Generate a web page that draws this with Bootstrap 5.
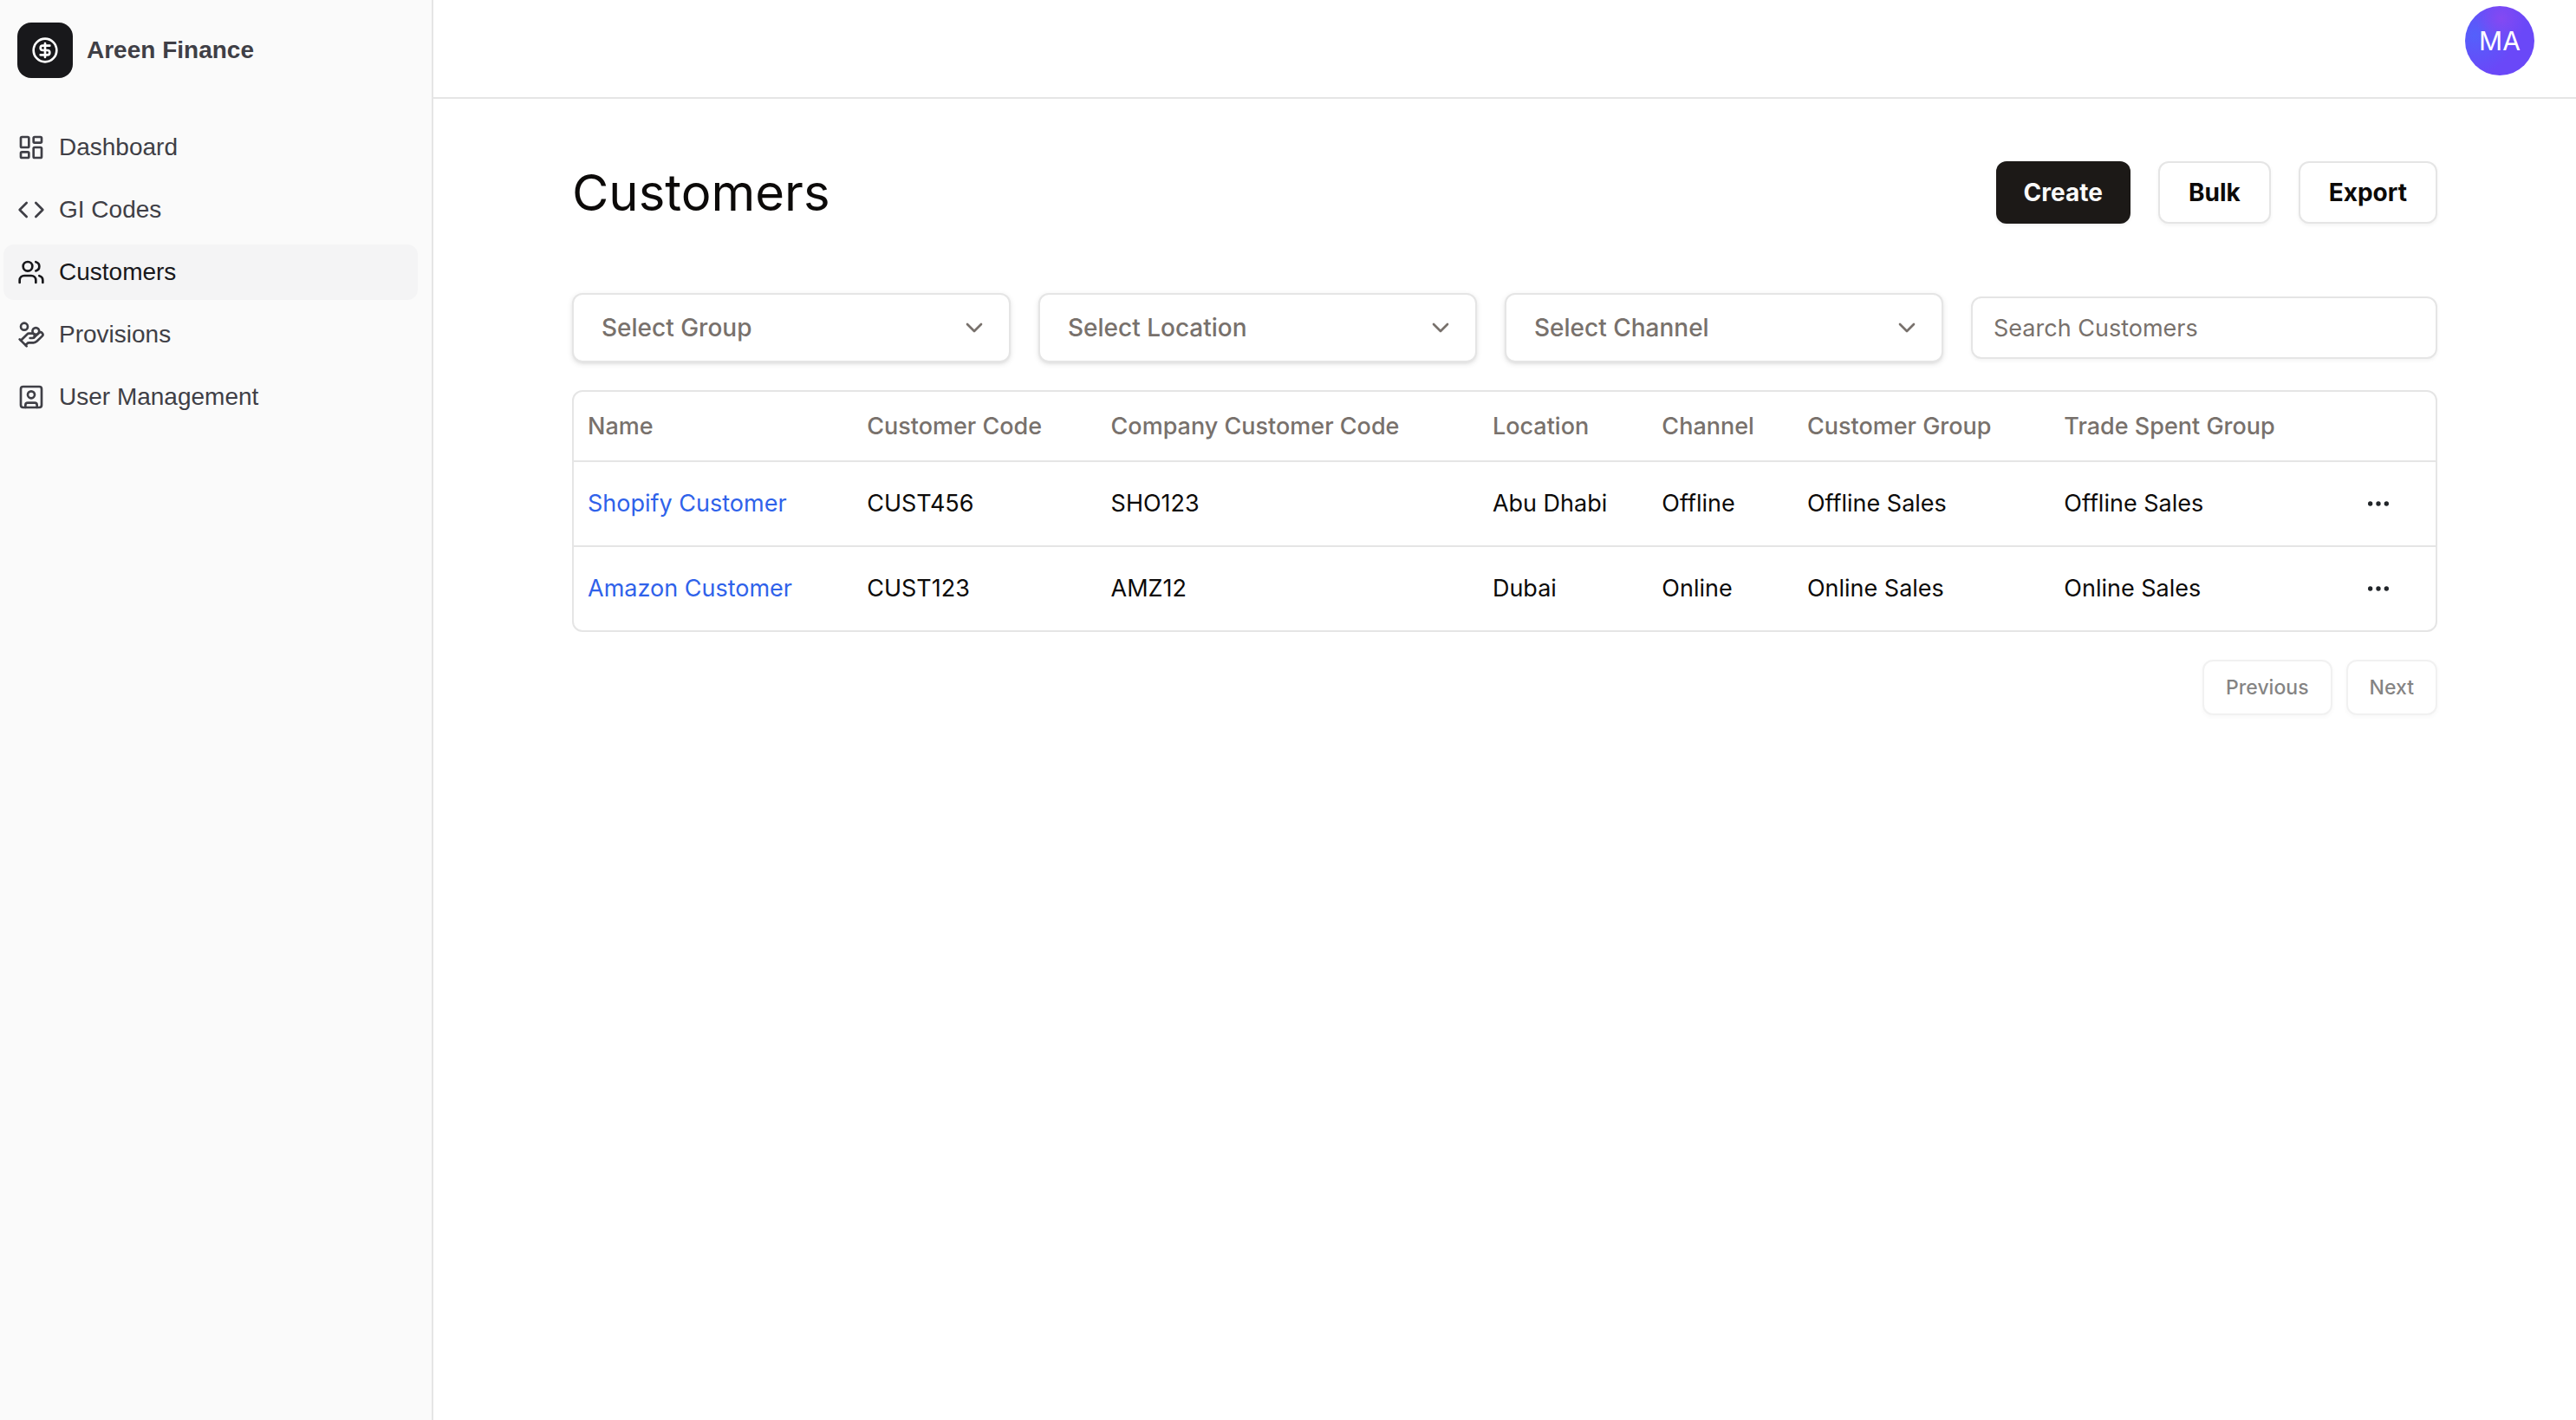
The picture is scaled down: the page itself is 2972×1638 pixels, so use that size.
<!DOCTYPE html>
<html lang="en">
<head>
<meta charset="utf-8">
<meta name="viewport" content="width=device-width, initial-scale=1">
<title>Customers - Areen Finance</title>
<link href="https://cdn.jsdelivr.net/npm/bootstrap@5.3.0/dist/css/bootstrap.min.css" rel="stylesheet">
<style>
:root{--line:#e5e5e5;--ink:#0c0a09;--muted:#78716c;--side-ink:#3f3f46}
body{font-family:Inter,"Liberation Sans",sans-serif;font-size:27px;line-height:40px;color:var(--ink);background:#fff}
svg{flex:none}
.ico{width:32px;height:32px;fill:none;stroke:currentColor;stroke-width:2;stroke-linecap:round;stroke-linejoin:round}
.sidebar{width:500px;flex:none;background:#fafafa;border-right:2px solid var(--line);font-family:"Liberation Sans",Arial,sans-serif;font-size:28px;color:var(--side-ink)}
.brand{padding:26px 20px 48px;gap:16px;color:inherit}
.brand-mark{width:64px;height:64px;border-radius:16px;background:#18181b;color:#fff}
.side-nav{padding:0 16px 0 4px;gap:8px}
.side-nav .nav-link{height:64px;padding:0 16px;gap:16px;border-radius:12px;color:inherit}
.side-nav .nav-link.active{background:#f4f4f5;color:#18181b}
.topbar{height:114px;padding:7px 48px 0;border-bottom:2px solid var(--line)}
.avatar{width:80px;height:80px;padding:0;border:0;border-radius:50%;color:#fff;font-size:30px;font-weight:400;background:radial-gradient(circle at 52% 18%,#8549f2 0,rgba(133,73,242,0) 38%),radial-gradient(circle at 14% 42%,#5460fb 0,rgba(84,96,251,0) 55%),#6a48f8}
.content{padding:72px 160px}
.page-title{font-size:58px;line-height:72px;font-weight:400}
.actions{gap:32px}
.act{height:72px;padding:0 33px;border:2px solid var(--line);border-radius:12px;background:#fff;color:var(--ink);font-size:28px;font-weight:700;box-shadow:0 2px 4px rgba(0,0,0,.05)}
.act-main{padding:0 32px;border:0;background:#1c1917;color:#fafaf9}
.act-sm{height:64px;padding:0 25px;font-size:23px;font-weight:500}
.act-sm:disabled{opacity:.5;background:#fff;color:var(--ink);border-color:var(--line)}
.filters{margin-top:80px;margin-bottom:32px}
.filters .gap-end{padding-right:32px}
.form-select.pick{height:80px;padding:0 72px 0 32px;border:2px solid var(--line);border-radius:12px;color:var(--muted);font-size:28px;font-weight:500;background-position:right 24px center;background-size:32px 32px;background-image:url("data:image/svg+xml,%3Csvg xmlns='http://www.w3.org/2000/svg' viewBox='0 0 24 24' fill='none' stroke='%2378716c' stroke-width='2' stroke-linecap='round' stroke-linejoin='round'%3E%3Cpath d='m6 9 6 6 6-6'/%3E%3C/svg%3E");box-shadow:0 2px 6px rgba(0,0,0,.1),0 2px 4px -2px rgba(0,0,0,.1)}
.form-control.find{height:72px;padding:0 24px;border:2px solid var(--line);border-radius:12px;font-size:27px;box-shadow:0 2px 4px rgba(0,0,0,.05)}
.find::placeholder{color:var(--muted)}
.grid-box{border:2px solid var(--line);border-radius:12px;overflow:hidden}
.grid-box .table{table-layout:fixed;margin:0;--bs-table-color:var(--ink);--bs-table-bg:transparent}
.grid-box th,.grid-box td{padding:0 16px;height:98px;vertical-align:middle;white-space:nowrap;border-bottom:2px solid var(--line)}
.grid-box th{height:80px;color:var(--muted);font-weight:500}
.grid-box tbody tr:last-child td{height:97px;border-bottom:0}
.grid-box td a{color:#2f62ea;text-decoration:none}
.more{width:64px;height:64px;padding:0;border:0}
.pager{margin-top:32px}
</style>
</head>
<body>
<div class="d-flex min-vh-100">
  <aside class="sidebar">
    <a href="#" class="brand d-flex align-items-center text-decoration-none fw-bold">
      <span class="brand-mark d-flex align-items-center justify-content-center">
        <svg class="ico" viewBox="0 0 24 24"><circle cx="12" cy="12" r="10"/><path d="M16 8h-6a2 2 0 1 0 0 4h4a2 2 0 1 1 0 4H8M12 18V6"/></svg>
      </span>
      <span>Areen Finance</span>
    </a>
    <nav class="side-nav nav flex-column">
      <a href="#" class="nav-link d-flex align-items-center"><svg class="ico" viewBox="0 0 24 24"><rect x="3" y="3" width="7" height="9" rx="1"/><rect x="14" y="3" width="7" height="5" rx="1"/><rect x="14" y="12" width="7" height="9" rx="1"/><rect x="3" y="16" width="7" height="5" rx="1"/></svg>Dashboard</a>
      <a href="#" class="nav-link d-flex align-items-center"><svg class="ico" viewBox="0 0 24 24"><path d="m16 18 6-6-6-6M8 6l-6 6 6 6"/></svg>GI Codes</a>
      <a href="#" class="nav-link active d-flex align-items-center" aria-current="page"><svg class="ico" viewBox="0 0 24 24"><path d="M16 21v-2a4 4 0 0 0-4-4H6a4 4 0 0 0-4 4v2"/><circle cx="9" cy="7" r="4"/><path d="M22 21v-2a4 4 0 0 0-3-3.87M16 3.13a4 4 0 0 1 0 7.75"/></svg>Customers</a>
      <a href="#" class="nav-link d-flex align-items-center"><svg class="ico" viewBox="0 0 24 24"><path d="M11 15h2a2 2 0 1 0 0-4h-3c-.6 0-1.1.2-1.4.6L3 17"/><path d="m7 21 1.6-1.4c.3-.4.8-.6 1.4-.6h4c1.1 0 2.1-.4 2.8-1.2l4.6-4.4a2 2 0 0 0-2.75-2.91l-4.2 3.9M2 16l6 6"/><circle cx="16" cy="9" r="2.9"/><circle cx="6" cy="5" r="3"/></svg>Provisions</a>
      <a href="#" class="nav-link d-flex align-items-center"><svg class="ico" viewBox="0 0 24 24"><rect x="3" y="3" width="18" height="18" rx="2"/><circle cx="12" cy="10" r="3"/><path d="M7 21v-2a2 2 0 0 1 2-2h6a2 2 0 0 1 2 2v2"/></svg>User Management</a>
    </nav>
  </aside>

  <div class="flex-grow-1">
    <header class="topbar d-flex justify-content-end align-items-start">
      <button type="button" class="avatar">MA</button>
    </header>

    <main class="content">
      <div class="d-flex justify-content-between align-items-center">
        <h1 class="page-title m-0">Customers</h1>
        <div class="actions d-flex">
          <button type="button" class="btn act act-main">Create</button>
          <button type="button" class="btn act">Bulk</button>
          <button type="button" class="btn act">Export</button>
        </div>
      </div>

      <form class="filters row g-0 align-items-center">
        <div class="col-3 gap-end"><select class="form-select pick" aria-label="Group"><option>Select Group</option></select></div>
        <div class="col-3 gap-end"><select class="form-select pick" aria-label="Location"><option>Select Location</option></select></div>
        <div class="col-3 gap-end"><select class="form-select pick" aria-label="Channel"><option>Select Channel</option></select></div>
        <div class="col-3"><input type="search" class="form-control find" placeholder="Search Customers" aria-label="Search Customers"></div>
      </form>

      <div class="grid-box">
        <table class="table">
          <colgroup><col style="width:15%"><col style="width:13.1%"><col style="width:20.5%"><col style="width:9.1%"><col style="width:7.8%"><col style="width:13.8%"><col style="width:15.4%"><col></colgroup>
          <thead>
            <tr><th scope="col">Name</th><th scope="col">Customer Code</th><th scope="col">Company Customer Code</th><th scope="col">Location</th><th scope="col">Channel</th><th scope="col">Customer Group</th><th scope="col">Trade Spent Group</th><th></th></tr>
          </thead>
          <tbody>
            <tr><td><a href="#">Shopify Customer</a></td><td>CUST456</td><td>SHO123</td><td>Abu Dhabi</td><td>Offline</td><td>Offline Sales</td><td>Offline Sales</td>
              <td><button type="button" class="btn more d-flex align-items-center justify-content-center" aria-label="Open menu"><svg class="ico" viewBox="0 0 24 24"><circle cx="12" cy="12" r="1"/><circle cx="19" cy="12" r="1"/><circle cx="5" cy="12" r="1"/></svg></button></td></tr>
            <tr><td><a href="#">Amazon Customer</a></td><td>CUST123</td><td>AMZ12</td><td>Dubai</td><td>Online</td><td>Online Sales</td><td>Online Sales</td>
              <td><button type="button" class="btn more d-flex align-items-center justify-content-center" aria-label="Open menu"><svg class="ico" viewBox="0 0 24 24"><circle cx="12" cy="12" r="1"/><circle cx="19" cy="12" r="1"/><circle cx="5" cy="12" r="1"/></svg></button></td></tr>
          </tbody>
        </table>
      </div>

      <div class="pager d-flex justify-content-end gap-3">
        <button type="button" class="btn act act-sm" disabled>Previous</button>
        <button type="button" class="btn act act-sm" disabled>Next</button>
      </div>
    </main>
  </div>
</div>
<script src="https://cdn.jsdelivr.net/npm/bootstrap@5.3.0/dist/js/bootstrap.bundle.min.js"></script>
</body>
</html>
